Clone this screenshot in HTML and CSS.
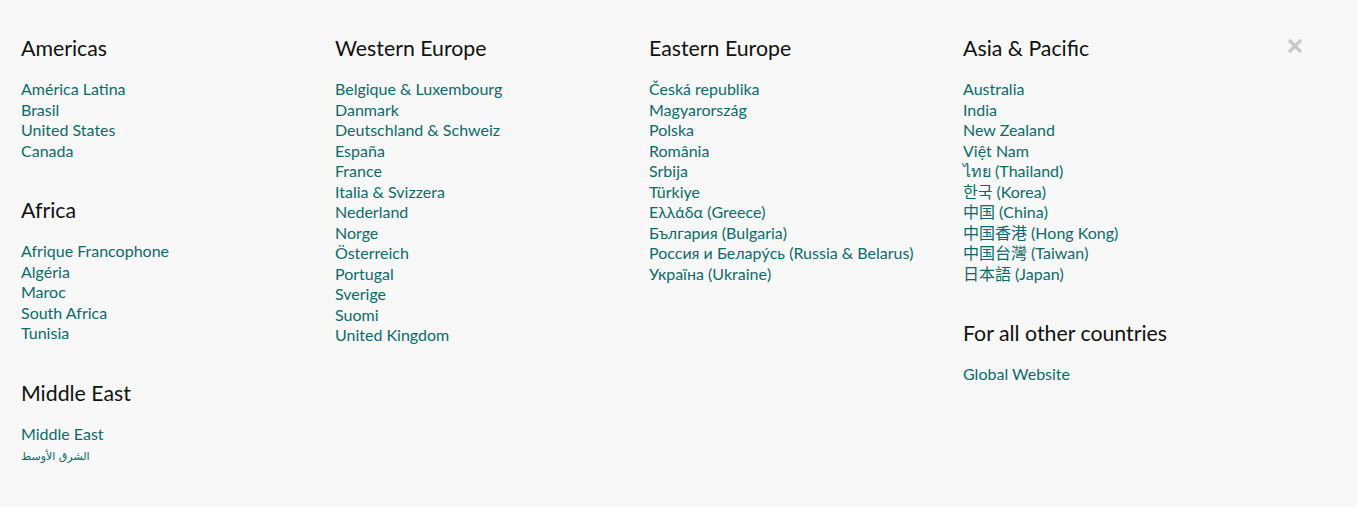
FILE: index.html
```html
<!DOCTYPE html>
<html lang="en">
<head>
<meta charset="utf-8">
<link rel="stylesheet" href="styles.css">
</head>
<body>
<div class="panel">
  <div class="col">
    <section class="group">
      <h2>Americas</h2>
      <ul>
        <li><a href="#">América Latina</a></li>
        <li><a href="#">Brasil</a></li>
        <li><a href="#">United States</a></li>
        <li><a href="#">Canada</a></li>
      </ul>
    </section>
    <section class="group">
      <h2>Africa</h2>
      <ul>
        <li><a href="#">Afrique Francophone</a></li>
        <li><a href="#">Algéria</a></li>
        <li><a href="#">Maroc</a></li>
        <li><a href="#">South Africa</a></li>
        <li><a href="#">Tunisia</a></li>
      </ul>
    </section>
    <section class="group">
      <h2>Middle East</h2>
      <ul>
        <li><a href="#">Middle East</a></li>
        <li><a href="#" class="ar" dir="rtl">الشرق الأوسط</a></li>
      </ul>
    </section>
  </div>
  <div class="col">
    <section class="group">
      <h2>Western Europe</h2>
      <ul>
        <li><a href="#">Belgique &amp; Luxembourg</a></li>
        <li><a href="#">Danmark</a></li>
        <li><a href="#">Deutschland &amp; Schweiz</a></li>
        <li><a href="#">España</a></li>
        <li><a href="#">France</a></li>
        <li><a href="#">Italia &amp; Svizzera</a></li>
        <li><a href="#">Nederland</a></li>
        <li><a href="#">Norge</a></li>
        <li><a href="#">Österreich</a></li>
        <li><a href="#">Portugal</a></li>
        <li><a href="#">Sverige</a></li>
        <li><a href="#">Suomi</a></li>
        <li><a href="#">United Kingdom</a></li>
      </ul>
    </section>
  </div>
  <div class="col">
    <section class="group">
      <h2>Eastern Europe</h2>
      <ul>
        <li><a href="#">Česká republika</a></li>
        <li><a href="#">Magyarország</a></li>
        <li><a href="#">Polska</a></li>
        <li><a href="#">România</a></li>
        <li><a href="#">Srbija</a></li>
        <li><a href="#">Türkiye</a></li>
        <li><a href="#">Ελλάδα (Greece)</a></li>
        <li><a href="#">България (Bulgaria)</a></li>
        <li><a href="#">Россия и Беларýсь (Russia &amp; Belarus)</a></li>
        <li><a href="#">Україна (Ukraine)</a></li>
      </ul>
    </section>
  </div>
  <div class="col">
    <section class="group">
      <h2>Asia &amp; Pacific</h2>
      <ul>
        <li><a href="#">Australia</a></li>
        <li><a href="#">India</a></li>
        <li><a href="#">New Zealand</a></li>
        <li><a href="#">Việt Nam</a></li>
        <li><a href="#">ไทย (Thailand)</a></li>
        <li><a href="#">한국 (Korea)</a></li>
        <li><a href="#">中国 (China)</a></li>
        <li><a href="#">中国香港 (Hong Kong)</a></li>
        <li><a href="#">中国台灣 (Taiwan)</a></li>
        <li><a href="#">日本語 (Japan)</a></li>
      </ul>
    </section>
    <section class="group">
      <h2>For all other countries</h2>
      <ul>
        <li><a href="#">Global Website</a></li>
      </ul>
    </section>
  </div>
  <button class="close" aria-label="Close">
    <svg width="16" height="16" viewBox="0 0 16 16"><path d="M2 2 L14 14 M14 2 L2 14" stroke="#c8c8c8" stroke-width="3.2" stroke-linecap="butt"/></svg>
  </button>
</div>
</body>
</html>
```
FILE: styles.css
```css
html, body {
  margin: 0;
  padding: 0;
  background: #f8f8f8;
}
body {
  font-family: Lato, "Noto Sans", "Noto Sans CJK SC", sans-serif;
  height: 507px;
}
.panel {
  position: relative;
  display: grid;
  grid-template-columns: 314px 314px 314px 314px;
  padding: 36px 0 0 21px;
}
.col {
  display: flex;
  flex-direction: column;
}
.group {
  margin-bottom: 37px;
}
h2 {
  margin: 0 0 19px;
  font-size: 21.3px;
  line-height: 24px;
  font-weight: 400;
  color: #111;
}
ul {
  list-style: none;
  margin: 0;
  padding: 0;
}
li {
  font-size: 16px;
  line-height: 20.5px;
}
a {
  color: #0d6a6a;
  text-decoration: none;
}
.ar {
  font-family: "DejaVu Sans", "Noto Sans", sans-serif;
  font-size: 11px;
}
.close {
  position: absolute;
  top: 38px;
  left: 1287px;
  width: 16px;
  height: 16px;
  padding: 0;
  border: 0;
  background: none;
  cursor: pointer;
}
.close svg {
  display: block;
}
```
